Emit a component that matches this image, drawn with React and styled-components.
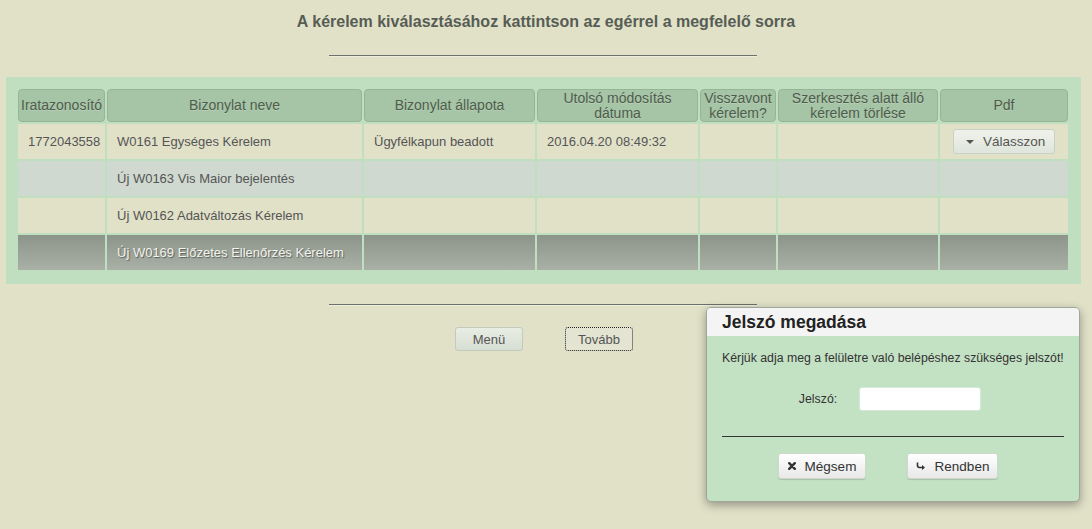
import styled, { createGlobalStyle } from "styled-components";

const GlobalStyle = createGlobalStyle`
  body {
    margin: 0;
    background: #e1e1c8;
    font-family: "Liberation Sans", Arial, sans-serif;
  }
`;

const columns = [87, 255, 171, 161, 76, 160, 128];

const headers = [
  "Iratazonosító",
  "Bizonylat neve",
  "Bizonylat állapota",
  "Utolsó módosítás dátuma",
  "Visszavont kérelem?",
  "Szerkesztés alatt álló kérelem törlése",
  "Pdf",
];

const rows = [
  { id: "1772043558", name: "W0161 Egységes Kérelem", state: "Ügyfélkapun beadott", date: "2016.04.20 08:49:32", pdf: true, tone: "plain" },
  { id: "", name: "Új W0163 Vis Maior bejelentés", state: "", date: "", tone: "alt" },
  { id: "", name: "Új W0162 Adatváltozás Kérelem", state: "", date: "", tone: "plain" },
  { id: "", name: "Új W0169 Előzetes Ellenőrzés Kérelem", state: "", date: "", tone: "hover" },
];

export default function App() {
  return (
    <Page>
      <GlobalStyle />
      <Title>A kérelem kiválasztásához kattintson az egérrel a megfelelő sorra</Title>
      <Rule />
      <Panel>
        <Table>
          <colgroup>
            {columns.map((w, i) => (
              <col key={i} style={{ width: w }} />
            ))}
          </colgroup>
          <thead>
            <tr>
              {headers.map((h) => (
                <Th key={h}>{h}</Th>
              ))}
            </tr>
          </thead>
          <tbody>
            {rows.map((r) => (
              <Row key={r.name} $tone={r.tone}>
                <Td $center>{r.id}</Td>
                <Td>{r.name}</Td>
                <Td>{r.state}</Td>
                <Td>{r.date}</Td>
                <Td />
                <Td />
                <Td $center>
                  {r.pdf && (
                    <SelectButton>
                      <Caret />
                      Válasszon
                    </SelectButton>
                  )}
                </Td>
              </Row>
            ))}
          </tbody>
        </Table>
      </Panel>
      <Rule $gap={20} />
      <NavRow>
        <NavButton>Menü</NavButton>
        <NavButton $focused>Tovább</NavButton>
      </NavRow>

      <Dialog>
        <DialogHead>Jelszó megadása</DialogHead>
        <DialogBody>
          <Message>Kérjük adja meg a felületre való belépéshez szükséges jelszót!</Message>
          <Field>
            <label>Jelszó:</label>
            <Input type="password" />
          </Field>
          <DialogRule />
          <DialogButtons>
            <DialogButton $w={88}>
              <svg width="8" height="8" viewBox="0 0 8 8">
                <path d="M1.2 1.2 L6.8 6.8 M6.8 1.2 L1.2 6.8" stroke="#333" strokeWidth="2.4" strokeLinecap="round" />
              </svg>
              Mégsem
            </DialogButton>
            <DialogButton $w={91}>
              <svg width="10" height="9" viewBox="0 0 10 9">
                <path d="M1.5 0.5 V3.5 Q1.5 5.5 3.5 5.5 H6.5" fill="none" stroke="#333" strokeWidth="1.6" />
                <path d="M6 3 L9 5.5 L6 8 Z" fill="#333" />
              </svg>
              Rendben
            </DialogButton>
          </DialogButtons>
        </DialogBody>
      </Dialog>
    </Page>
  );
}

const Page = styled.div`
  position: relative;
  min-height: 529px;
  padding-top: 13px;
  box-sizing: border-box;
  overflow: hidden;
`;

const Title = styled.h1`
  margin: 0;
  text-align: center;
  font-size: 16px;
  line-height: 18px;
  font-weight: bold;
  color: #575d55;
`;

const Rule = styled.div`
  width: 428px;
  height: 1px;
  margin: ${(p) => p.$gap ?? 24}px auto 0 329px;
  background: #6b7269;
  box-shadow: 0 1px 0 #eeeedf;
`;

const Panel = styled.div`
  margin: 21px 0 0 6px;
  width: 1075px;
  box-sizing: border-box;
  padding: 10px 11px 12px 10px;
  background: #c0dec0;
`;

const Table = styled.table`
  border-collapse: separate;
  border-spacing: 2px;
  table-layout: fixed;
  width: 1054px;
  font-size: 13px;
`;

const Th = styled.th`
  height: 33px;
  box-sizing: border-box;
  padding: 0 1px;
  background: #a6c4a6;
  border: 1px solid #95b595;
  border-radius: 4px;
  color: #4e5c4c;
  font-weight: normal;
  font-size: 14px;
  line-height: 15px;
  text-shadow: 0 1px 0 rgba(255, 255, 255, 0.2);
`;

const tones = {
  plain: "background: #e1e1c8; color: #555;",
  alt: "background: #cfd9cf; color: #555;",
  hover:
    "background: linear-gradient(#8d958b, #a9b0a5); color: #f1f3ee; text-shadow: 1px 1px 1px #5a5f58;",
};

const Row = styled.tr`
  td {
    ${(p) => tones[p.$tone]}
  }
`;

const Td = styled.td`
  height: 35px;
  padding: 0 10px;
  box-sizing: border-box;
  white-space: nowrap;
  text-align: ${(p) => (p.$center ? "center" : "left")};
`;

const SelectButton = styled.button`
  display: inline-flex;
  align-items: center;
  gap: 9px;
  width: 102px;
  height: 25px;
  padding: 0 0 0 12px;
  border: 1px solid #c8d1c6;
  border-radius: 3px;
  background: linear-gradient(#f0f2ea, #dfe5dc);
  font-family: inherit;
  font-size: 13.5px;
  color: #555;
  cursor: pointer;
`;

const Caret = styled.span`
  width: 0;
  height: 0;
  border-left: 4px solid transparent;
  border-right: 4px solid transparent;
  border-top: 4px solid #555;
`;

const NavRow = styled.div`
  display: flex;
  justify-content: center;
  gap: 42px;
  margin: 22px 0 0 -4px;
`;

const NavButton = styled.button`
  width: 68px;
  height: 24px;
  padding: 0;
  border-radius: 3px;
  font-family: inherit;
  font-size: 13px;
  color: #555;
  cursor: pointer;
  border: ${(p) => (p.$focused ? "1px dotted #222" : "1px solid #c3cbbf")};
  background: ${(p) =>
    p.$focused ? "#e3e4d1" : "linear-gradient(#e9ede3, #d6ded3)"};
`;

const Dialog = styled.div`
  position: absolute;
  left: 706px;
  top: 307px;
  width: 374px;
  height: 195px;
  box-sizing: border-box;
  border: 1px solid #9fa79d;
  border-radius: 5px;
  overflow: hidden;
  background: #c3e1c3;
  box-shadow: 0 3px 10px rgba(0, 0, 0, 0.35);
`;

const DialogHead = styled.div`
  height: 28px;
  padding-left: 15px;
  background: #f4f4f4;
  font-size: 17.5px;
  font-weight: bold;
  line-height: 29px;
  color: #222;
`;

const DialogBody = styled.div`
  padding: 15px 15px 0;
  font-size: 12.3px;
  color: #333;
`;

const Message = styled.div`
  line-height: 14px;
`;

const Field = styled.div`
  display: flex;
  justify-content: center;
  align-items: center;
  gap: 22px;
  margin: 22px 0 0 -6px;
  label {
    font-size: 12.3px;
    color: #333;
  }
`;

const Input = styled.input`
  width: 122px;
  height: 24px;
  box-sizing: border-box;
  border: 1px solid #d8e8d8;
  border-radius: 3px;
  background: #fff;
`;

const DialogRule = styled.div`
  height: 1px;
  margin-top: 25px;
  background: #333;
`;

const DialogButtons = styled.div`
  display: flex;
  justify-content: center;
  gap: 41px;
  margin: 16px 0 0 -10px;
`;

const DialogButton = styled.button`
  display: inline-flex;
  align-items: center;
  justify-content: center;
  gap: 9px;
  width: ${(p) => p.$w}px;
  height: 26px;
  padding: 0;
  border: 1px solid #d0d8d0;
  border-radius: 3px;
  background: linear-gradient(#ffffff, #e8e8e8);
  box-shadow: 0 1px 1px rgba(0, 0, 0, 0.15);
  font-family: inherit;
  font-size: 13.5px;
  color: #333;
  cursor: pointer;
`;
